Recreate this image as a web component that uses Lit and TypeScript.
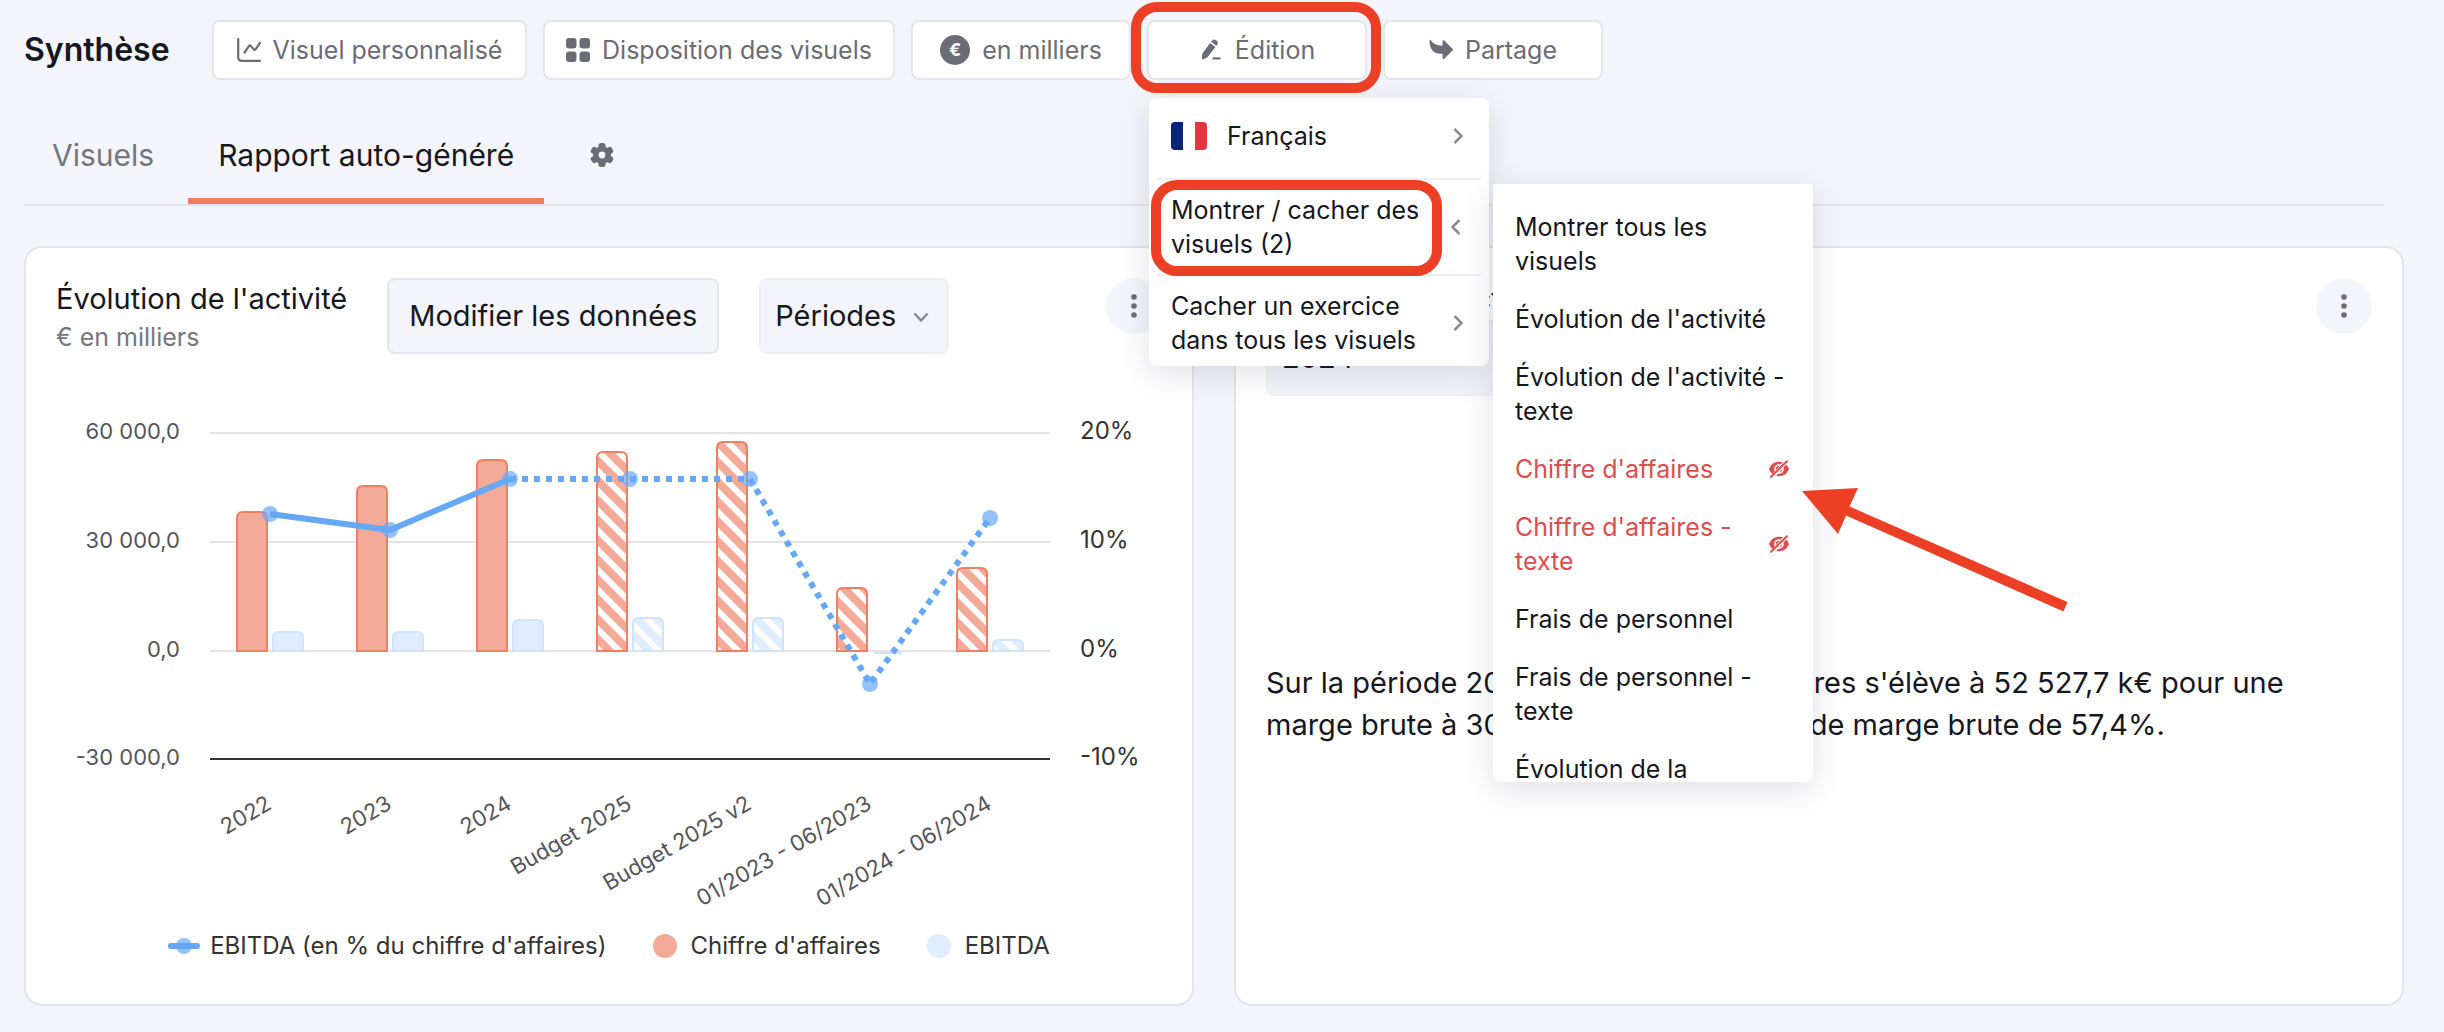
import { LitElement, html, svg, css } from "lit";
import { customElement } from "lit/decorators.js";

const iconChart = html`<svg class="icon" viewBox="0 0 24 24" aria-hidden="true" fill="none" stroke="currentColor" stroke-width="2.2" stroke-linecap="round" stroke-linejoin="round"><path d="M1.2 1v18.6a3.2 3.2 0 0 0 3.2 3.2H23"/><path d="M7.5 14.5l4.6-6.6c.5-.7 1.1-.7 1.7 0l3 3.5c.6.7 1.200.6 1.700-.1L23 5"/></svg>`;
const iconGrid = html`<svg class="icon" viewBox="0 0 24 24" aria-hidden="true" fill="currentColor"><rect width="10.500" height="10.500" rx="3"/><rect x="13.500" width="10.500" height="10.500" rx="3"/><rect y="13.500" width="10.500" height="10.500" rx="3"/><rect x="13.500" y="13.500" width="10.500" height="10.500" rx="3"/></svg>`;
const iconPen = html`<svg class="icon" viewBox="0 0 24 24" aria-hidden="true" fill="currentColor"><path d="M13.200 2.600c1-1.300 2.400-1.300 3.500-.5l1.200.9c1.100.9 1.300 2.200.4 3.400l-1 1.300-5.200-3.900z"/><path d="M11.100 5.100l5.300 4-7.500 9.700c-.3.400-.7.700-1.200.9l-3.300 1.600c-.9.400-1.500 0-1.500-1l.3-3.700c0-.6.300-1.100.6-1.500z"/><path d="M13.500 19.400h8v2.100h-8z"/></svg>`;
const iconShare = html`<svg class="icon" viewBox="0 0 24 24" aria-hidden="true" fill="currentColor"><path d="M.6 2.600c0-.8.900-1 1.300-.4 1.900 3.300 5.200 5.200 9.100 5.200h2.600V3.200c0-.9 1-1.300 1.600-.7l8.300 8.300c.5.500.5 1.200 0 1.700l-8.300 8.300c-.6.600-1.600.2-1.600-.7v-4.300h-2.600C4.600 15.800.4 10.800.6 2.600z"/></svg>`;
const iconGear = html`<svg class="icon" viewBox="0 0 24 24" aria-hidden="true"><g fill="currentColor"><circle cx="12" cy="12" r="9"/><rect x="8.500" width="7" height="24" rx="2.500"/><rect x="8.500" width="7" height="24" rx="2.500" transform="rotate(60 12 12)"/><rect x="8.500" width="7" height="24" rx="2.500" transform="rotate(120 12 12)"/></g><circle cx="12" cy="12" r="3.400" fill="#f4f5fa"/></svg>`;
const iconEyeOff = html`<svg class="eye" viewBox="0 0 20 16" aria-hidden="true"><path d="M0 8C2 3.200 5.700.8 10 .8S18 3.200 20 8c-2 4.800-5.700 7.200-10 7.200S2 12.800 0 8z" fill="currentColor"/><circle cx="10" cy="8" r="4" fill="none" stroke="#fff" stroke-width="1.600"/><path d="M2.500 17L18.500-1" stroke="#fff" stroke-width="4"/><path d="M2 15.700L18 .3" stroke="currentColor" stroke-width="2" stroke-linecap="round"/></svg>`;
const chevronRight = html`<svg class="chevron" viewBox="0 0 10 16" aria-hidden="true"><path d="M1.500 1l7 7-7 7"/></svg>`;
const chevronLeft = html`<svg class="chevron back" viewBox="0 0 10 16" aria-hidden="true"><path d="M8.500 1l-7 7 7 7"/></svg>`;
const kebab = html`<button class="kebab" aria-label="Options"><svg viewBox="0 0 6 24" aria-hidden="true" fill="currentColor"><circle cx="3" cy="3" r="2.800"/><circle cx="3" cy="12" r="2.800"/><circle cx="3" cy="21" r="2.800"/></svg></button>`;

interface Period {
  label: string;
  revenue: number;
  ebitda: number;
  line: number;
  planned?: boolean;
}

/* revenue and ebitda are bar heights, line is the y of the margin point, in chart units */
const PERIODS: Period[] = [
  { label: "2022", revenue: 140, ebitda: 20, line: 144 },
  { label: "2023", revenue: 166, ebitda: 20, line: 160 },
  { label: "2024", revenue: 192, ebitda: 32, line: 109 },
  { label: "Budget 2025", revenue: 200, ebitda: 34, line: 109, planned: true },
  { label: "Budget 2025 v2", revenue: 210, ebitda: 34, line: 109, planned: true },
  { label: "01/2023 - 06/2023", revenue: 64, ebitda: -2, line: 314, planned: true },
  { label: "01/2024 - 06/2024", revenue: 84, ebitda: 12, line: 148, planned: true },
];
const TICKS = [
  { y: 63, left: "60 000,0", right: "20%" },
  { y: 172, left: "30 000,0", right: "10%" },
  { y: 281, left: "0,0", right: "0%" },
  { y: 389, left: "-30 000,0", right: "-10%" },
];
const BASE = 281;
const slot = (i: number) => 244 + i * 120;

function bar(x: number, h: number, kind: string) {
  if (h < 0) return svg`<rect x=${x + 2} y=${BASE + 1} width="28" height="2" class="below"/>`;
  const top = BASE - h + 1;
  return svg`<path class=${kind} d=${`M${x + 1} ${BASE}V${top + 6}q0 -6 6 -6h18q6 0 6 6V${BASE}z`}/>`;
}

@customElement("report-chart")
export class ReportChart extends LitElement {
  static styles = css`
    :host { display: block; }
    svg { display: block; width: 100%; height: auto; overflow: visible; }
    text { font-family: Inter, "Open Sans", sans-serif; }
    .left { font-size: 22px; fill: #54555a; text-anchor: end; }
    .right { font-size: 24px; fill: #333; }
    .grid { stroke: #e4e4e6; stroke-width: 2; }
    .axis { stroke: #333; stroke-width: 2; }
    .below { fill: #cfe3fb; }
    .revenue, .revenue-plan { fill: #f4aa98; stroke: #ee7f63; stroke-width: 2; }
    .revenue-plan { fill: url(#hatch-revenue); }
    .ebitda, .ebitda-plan { fill: #e0edfe; stroke: #cfe3fb; stroke-width: 2; }
    .ebitda-plan { fill: url(#hatch-ebitda); }
    .margin { fill: none; stroke: #66a8f6; stroke-width: 6; stroke-linejoin: round; }
    .planned { stroke-dasharray: 6 6; }
    .point { fill: #66a8f6; opacity: 0.7; }
  `;

  render() {
    const pts = PERIODS.map((p, i) => `${slot(i)},${p.line}`);
    return html`<svg viewBox="0 0 1166 550" role="img" aria-label="Évolution de l'activité">
      <defs>
        <pattern id="hatch-revenue" width="14" height="14" patternUnits="userSpaceOnUse" patternTransform="rotate(-45)"><rect width="14" height="14" fill="#fff"/><rect width="8" height="14" fill="#f4aa98"/></pattern>
        <pattern id="hatch-ebitda" width="14" height="14" patternUnits="userSpaceOnUse" patternTransform="rotate(-45)"><rect width="14" height="14" fill="#fff"/><rect width="8" height="14" fill="#e0edfe"/></pattern>
      </defs>
      ${TICKS.map((t, i) => svg`
        <line class=${i === 3 ? "axis" : "grid"} x1="184" x2="1024" y1=${t.y} y2=${t.y}/>
        <text class="left" x="154" y=${t.y + 6}>${t.left}</text>
        <text class="right" x="1054" y=${t.y + 6}>${t.right}</text>`)}
      ${PERIODS.map((p, i) => svg`
        ${bar(slot(i) - 34, p.revenue, p.planned ? "revenue-plan" : "revenue")}
        ${bar(slot(i) + 2, p.ebitda, p.planned ? "ebitda-plan" : "ebitda")}
        <text class="left" transform=${`translate(${slot(i) + 3} 438) rotate(-30)`}>${p.label}</text>`)}
      ${PERIODS.map((p, i) => svg`<circle class="point" cx=${slot(i)} cy=${p.line} r="8"/>`)}
      <polyline class="margin" points=${pts.slice(0, 3).join(" ")}/>
      <polyline class="margin planned" points=${pts.slice(2).join(" ")}/>
    </svg>`;
  }
}

const VISUALS: { label: string; hidden?: boolean }[] = [
  { label: "Montrer tous les visuels" },
  { label: "Évolution de l'activité" },
  { label: "Évolution de l'activité - texte" },
  { label: "Chiffre d'affaires", hidden: true },
  { label: "Chiffre d'affaires - texte", hidden: true },
  { label: "Frais de personnel" },
  { label: "Frais de personnel - texte" },
  { label: "Évolution de la" },
];

@customElement("app-root")
export class AppRoot extends LitElement {
  static styles = css`
    :host {
      display: block;
      box-sizing: border-box;
      min-height: 100vh;
      padding: 20px 40px 26px 24px;
      background: #f4f5fa;
      color: #16171f;
      font-family: Inter, "Open Sans", sans-serif;
      font-size: 25px;
      line-height: 34px;
    }
    * { box-sizing: border-box; }
    button, select { font: inherit; color: inherit; margin: 0; cursor: pointer; }
    h1, h2, p { margin: 0; font-weight: 400; }
    .top { display: flex; align-items: center; gap: 16px; }
    .title { font-size: 32px; font-weight: 600; width: 172px; white-space: nowrap; }
    .tool {
      display: flex; align-items: center; justify-content: center; gap: 12px;
      height: 60px; min-width: 220px; padding: 0 18px;
      background: #fff; border: 2px solid #e4e4eb; border-radius: 8px;
      color: #6b6c75; white-space: nowrap;
    }
    .tool.custom { min-width: 315px; }
    .tool.layout { min-width: 352px; }
    .icon { width: 24px; height: 24px; flex: none; display: block; }
    .coin {
      width: 30px; height: 30px; border-radius: 50%; background: #6b6c75; color: #fff;
      font-size: 18px; font-weight: 700; line-height: 30px; text-align: center;
    }
    .edition { position: relative; z-index: 2; }
    .ring { position: absolute; border: 10px solid #eb4026; border-radius: 26px; pointer-events: none; }
    .ring.button { inset: -18px -14px -13px -16px; }
    .ring.entry { inset: 0 39px -2px -6px; }

    .menu {
      position: absolute; left: 2px; top: 78px; width: 340px; padding: 8px 8px 0;
      background: #fff; border-radius: 8px; box-shadow: 0 8px 32px rgba(40, 45, 80, 0.14);
    }
    .entry-box { position: relative; border-bottom: 2px solid #eeeef2; }
    .entry-box:last-child { border-bottom: 0; }
    .item {
      display: flex; align-items: center; width: 100%; padding: 13px 18px 13px 14px;
      border: 0; background: none; text-align: left;
    }
    .entry-box:first-child .item { padding-bottom: 25px; }
    .entry-box:last-child .item { padding-bottom: 9px; }
    .item .label { flex: 1; white-space: nowrap; }
    .flag { width: 36px; height: 28px; margin-right: 20px; border-radius: 4px; background: linear-gradient(90deg, #0a2479 33.3%, #fff 33.3% 66.6%, #e1383f 66.6%); }
    .chevron { width: 10px; height: 16px; flex: none; fill: none; stroke: #8c8c90; stroke-width: 2.5; }
    .chevron.back { margin-right: 2px; }
    .submenu {
      position: absolute; left: 346px; top: 164px; width: 320px; height: 598px; overflow: hidden;
      padding: 14px 0 0; background: #fff; border-radius: 0 0 8px 8px;
      box-shadow: 0 8px 32px rgba(40, 45, 80, 0.14);
    }
    .visual {
      display: flex; align-items: center; justify-content: space-between; gap: 16px; width: 100%;
      padding: 12px 24px 12px 22px; border: 0; background: none; text-align: left;
    }
    .visual.hidden { color: #dc4e4e; }
    .eye { width: 20px; height: 16px; flex: none; overflow: visible; }
    .arrow { position: absolute; left: 650px; top: 464px; width: 280px; height: 130px; pointer-events: none; }

    .tabs { display: flex; align-items: stretch; gap: 6px; margin: 24px 20px 0 0; border-bottom: 2px solid #e4e4eb; }
    .tab {
      padding: 34px 28px 26px; border: 0; border-bottom: 6px solid transparent; background: none;
      font-size: 30px; color: #75767e; white-space: nowrap;
    }
    .tab.active { min-width: 356px; color: #16171f; border-bottom-color: #ee7f63; }
    .settings { padding: 2px 40px 0; border: 0; background: none; color: #6b6c75; }

    .cards { display: grid; grid-template-columns: 1fr 1fr; gap: 40px; margin-top: 40px; }
    .card { display: flex; flex-direction: column; min-width: 0; background: #fff; border: 2px solid #e4e4eb; border-radius: 18px; }
    .head { display: flex; align-items: flex-start; padding: 30px 30px 0; }
    .heading { min-width: 291px; margin-right: 40px; }
    .name { font-size: 29px; line-height: 42px; white-space: nowrap; }
    .unit-note { color: #75767e; }
    .edit { height: 76px; min-width: 332px; padding: 0 18px; margin-right: 40px; border: 2px solid #e4e4eb; border-radius: 8px; background: #f4f5fa; font-size: 29px; white-space: nowrap; }
    .picker { position: relative; display: block; width: 190px; height: 76px; }
    .picker.year { width: 244px; }
    .picker select {
      appearance: none; width: 100%; height: 100%; padding: 0 40px 0 14px; border: 2px solid #f0f0f4;
      border-radius: 8px; background: #f4f5fa; font-size: 29px;
    }
    .picker svg { position: absolute; right: 20px; top: 34px; width: 16px; height: 10px; fill: none; stroke: #8c8c90; stroke-width: 2.5; pointer-events: none; }
    .kebab { display: grid; place-items: center; width: 56px; height: 56px; margin-left: auto; padding: 0; border: 0; border-radius: 50%; background: #f4f5fa; color: #6b6c75; }
    .kebab svg { width: 6px; height: 24px; }
    report-chart { margin-top: 16px; }
    .legend { display: flex; justify-content: center; align-items: center; gap: 46px; padding: 9px 0 41px; color: #333; font-size: 24px; white-space: nowrap; }
    .key { display: flex; align-items: center; gap: 14px; }
    .key.line { gap: 10px; }
    .dot { width: 24px; height: 24px; border-radius: 50%; background: #f4aa98; }
    .dot.pale { background: #e0edfe; }
    .key svg { width: 32px; height: 16px; }
    .body { flex: 1; display: flex; align-items: center; padding: 8px 100px 0 30px; font-size: 29px; line-height: 42px; }
  `;

  render() {
    const down = html`<svg viewBox="0 0 16 10" aria-hidden="true"><path d="M1.500 1.500L8 8.500l6.500-7"/></svg>`;
    return html`
      <header class="top">
        <h1 class="title">Synthèse</h1>
        <button class="tool custom">${iconChart}Visuel personnalisé</button>
        <button class="tool layout">${iconGrid}Disposition des visuels</button>
        <button class="tool"><span class="coin">€</span>en milliers</button>
        <div class="edition">
          <button class="tool" aria-expanded="true">${iconPen}Édition</button>
          <div class="menu">
            <div class="entry-box">
              <button class="item"><span class="flag"></span><span class="label">Français</span>${chevronRight}</button>
            </div>
            <div class="entry-box">
              <button class="item" aria-expanded="true"><span class="label">Montrer / cacher des<br />visuels (2)</span>${chevronLeft}</button>
              <div class="ring entry"></div>
            </div>
            <div class="entry-box">
              <button class="item"><span class="label">Cacher un exercice<br />dans tous les visuels</span>${chevronRight}</button>
            </div>
          </div>
          <div class="submenu">
            ${VISUALS.map((v) => html`<button class="visual ${v.hidden ? "hidden" : ""}"><span>${v.label}</span>${v.hidden ? iconEyeOff : ""}</button>`)}
          </div>
          <div class="ring button"></div>
          <svg class="arrow" viewBox="0 0 280 130" aria-hidden="true"><path fill="#eb4026" d="M5 7l56-3-8.500 18.500L270.500 118l-4 9.500L49 31.500 41 50z"/></svg>
        </div>
        <button class="tool">${iconShare}Partage</button>
      </header>

      <nav class="tabs">
        <button class="tab">Visuels</button>
        <button class="tab active">Rapport auto-généré</button>
        <button class="settings" aria-label="Paramètres">${iconGear}</button>
      </nav>

      <main class="cards">
        <section class="card">
          <div class="head">
            <div class="heading">
              <h2 class="name">Évolution de l'activité</h2>
              <p class="unit-note">€ en milliers</p>
            </div>
            <button class="edit">Modifier les données</button>
            <label class="picker"><select aria-label="Périodes"><option>Périodes</option></select>${down}</label>
            ${kebab}
          </div>
          <report-chart></report-chart>
          <div class="legend">
            <span class="key line"><svg viewBox="0 0 32 16" aria-hidden="true"><circle cx="16" cy="8" r="8" fill="#66a8f6" opacity="0.7"/><path d="M3 8h26" stroke="#66a8f6" stroke-width="6" stroke-linecap="round"/></svg>EBITDA (en % du chiffre d'affaires)</span>
            <span class="key"><span class="dot"></span>Chiffre d'affaires</span>
            <span class="key"><span class="dot pale"></span>EBITDA</span>
          </div>
        </section>
        <section class="card">
          <div class="head">
            <div class="heading">
              <h2 class="name">Évolution de l'activité</h2>
              <label class="picker year"><select aria-label="Exercice"><option>2024</option></select>${down}</label>
            </div>
            ${kebab}
          </div>
          <div class="body">
            <p>Sur la période 2024, votre chiffre d'affaires s'élève à 52 527,7 k€ pour une marge brute à 30 150,9 k€, soit un taux de marge brute de 57,4%.</p>
          </div>
        </section>
      </main>
    `;
  }
}
